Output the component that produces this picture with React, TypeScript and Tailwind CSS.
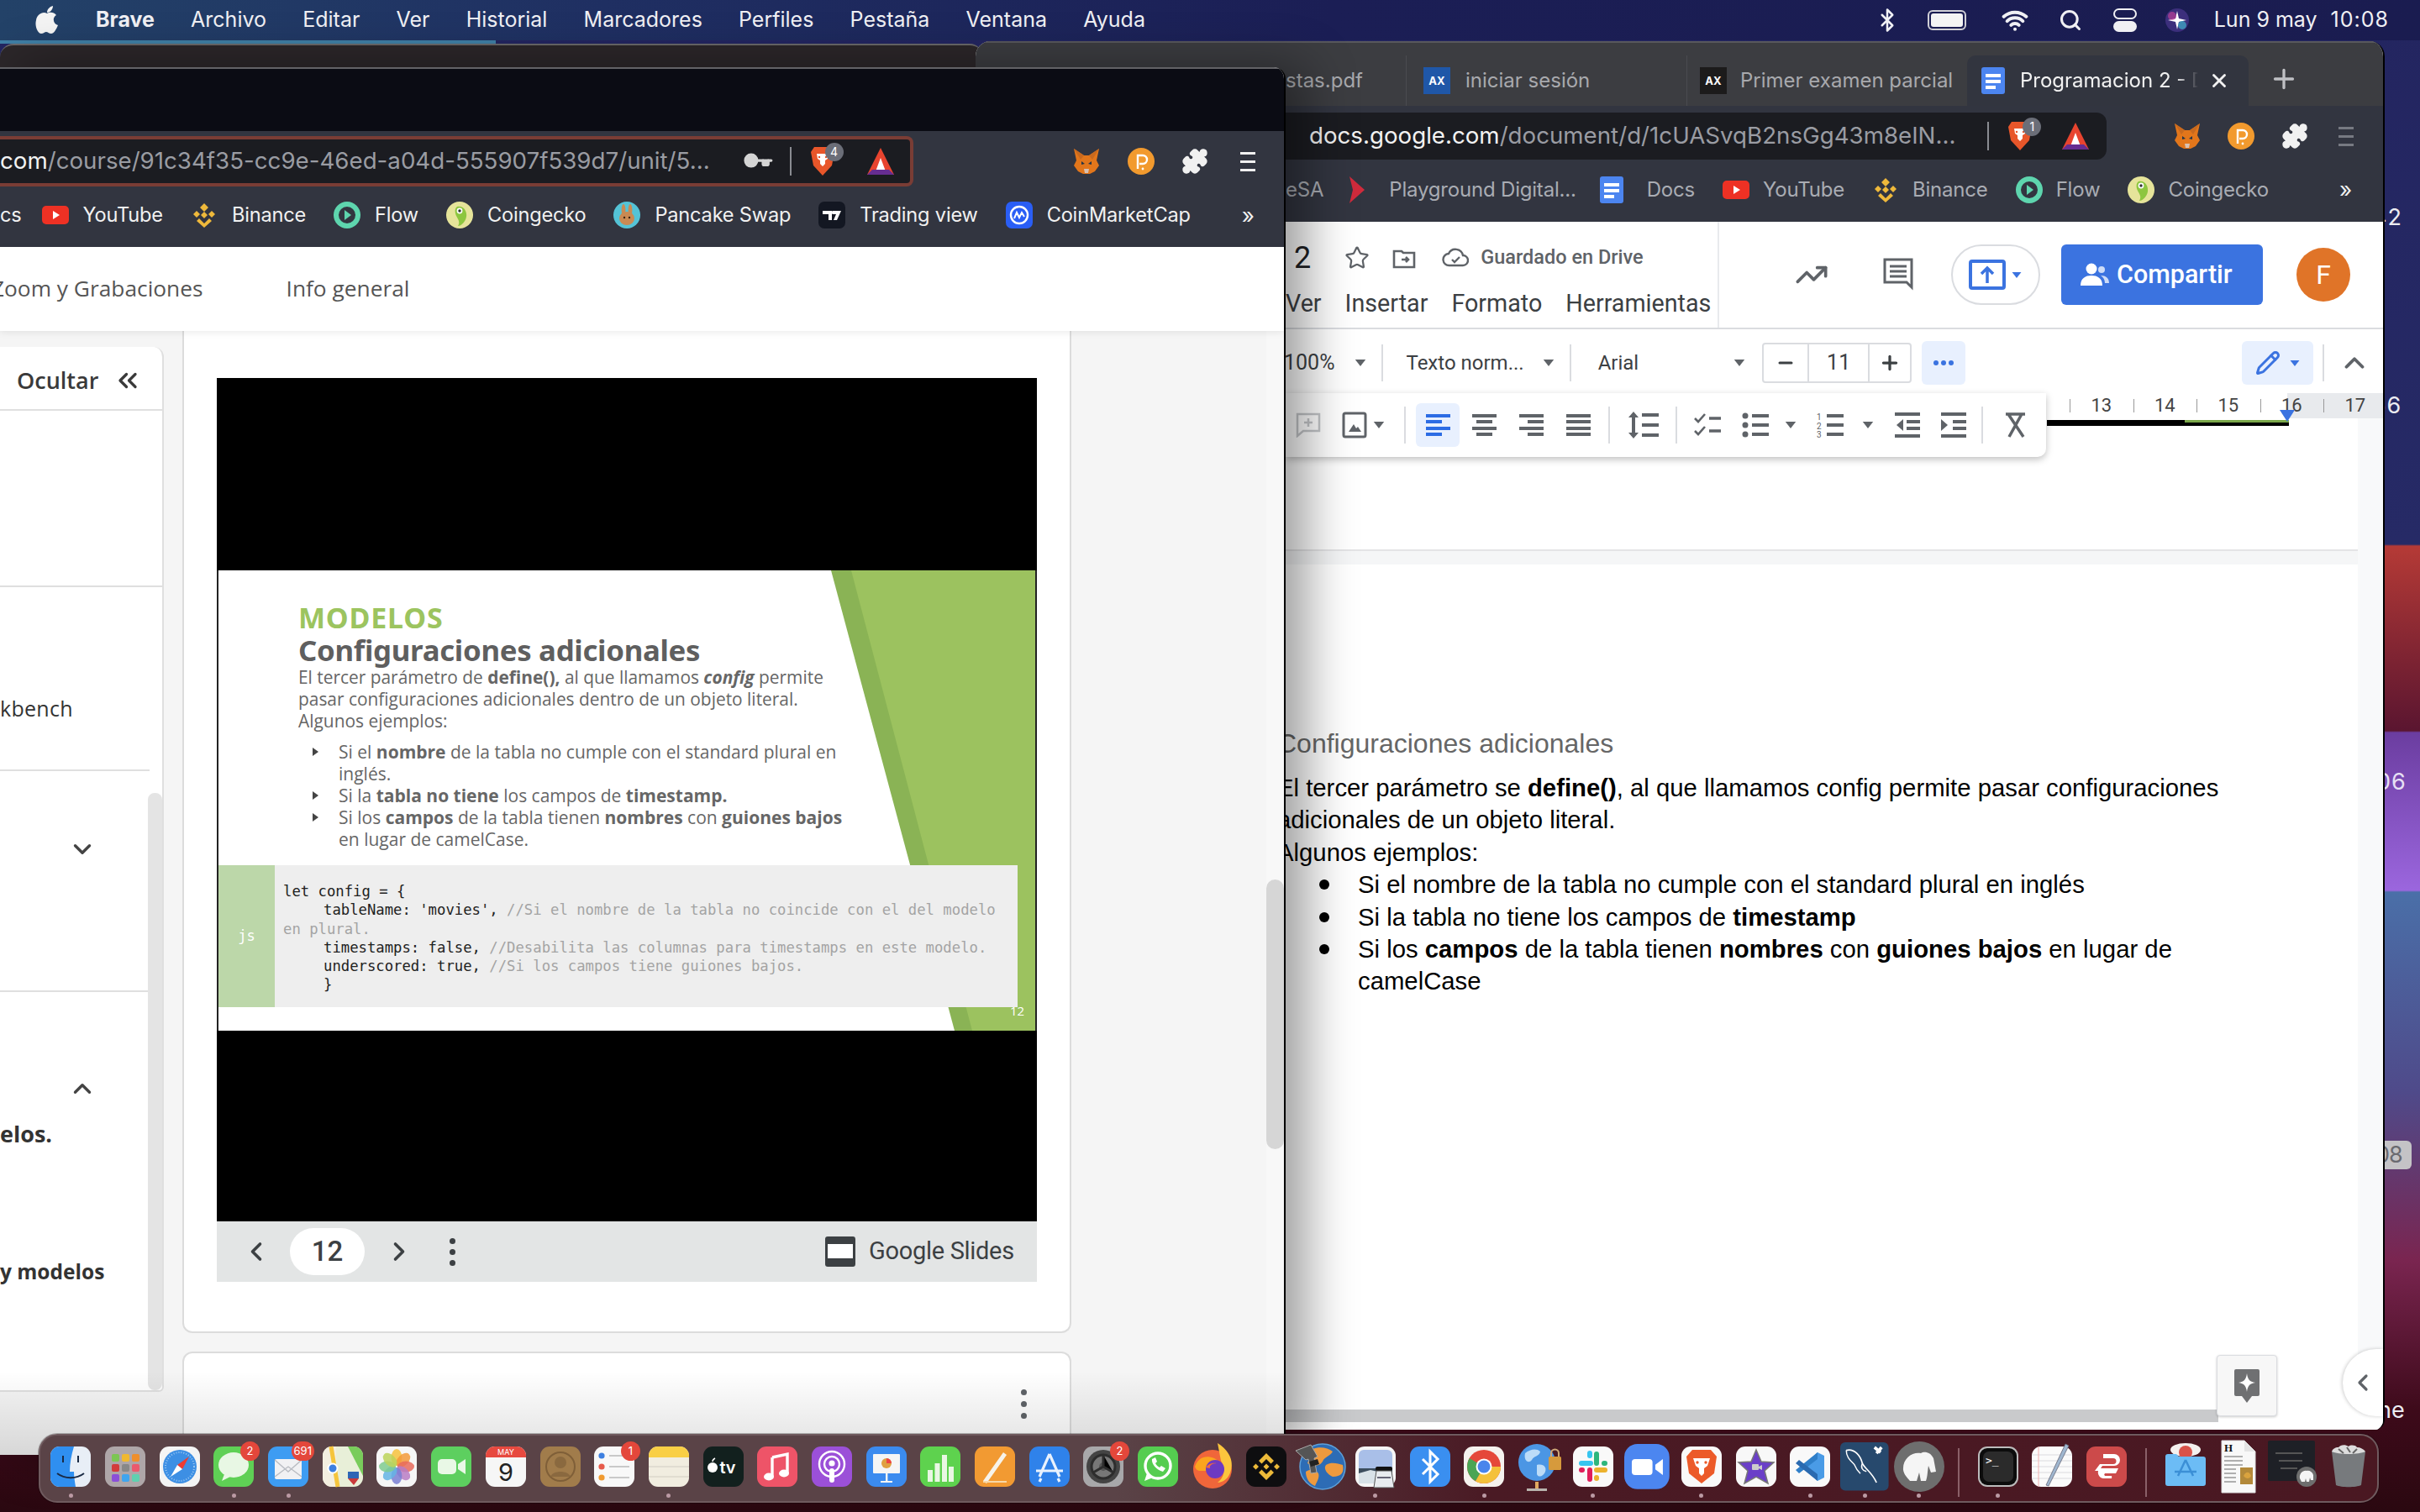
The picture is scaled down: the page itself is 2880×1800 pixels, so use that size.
import React from "react";
import { ChevronLeft, ChevronRight, ChevronDown, ChevronUp, ChevronsLeft, Star, Search, Bluetooth, Wifi, Plus, Minus, X, Key, Puzzle, TrendingUp, Pencil } from "lucide-react";

const Caret = ({ c = "#5f6368", s = 9 }: { c?: string; s?: number }) => (
  <svg width={s * 2} height={s} viewBox="0 0 18 9" className="shrink-0"><path d="M2 0h14L9 9z" fill={c} /></svg>
);
const YT = () => (<svg width="32" height="32" viewBox="0 0 32 32" className="shrink-0"><rect x="0" y="5" width="32" height="22" rx="5" fill="#ee3124" /><path d="M13 11l8 5-8 5z" fill="#fff" /></svg>);
const Binance = () => (<svg width="32" height="32" viewBox="0 0 32 32" className="shrink-0" fill="#efb93b"><path d="M16 2l5 5-5 5-5-5zM7 11l4 4-4 4-4-4zM25 11l4 4-4 4-4-4zM16 12l4 4-4 4-4-4zM10 20l6 6 6-6 3 3-9 8-9-8z" /></svg>);
const Flow = () => (<svg width="32" height="32" viewBox="0 0 32 32" className="shrink-0"><circle cx="16" cy="16" r="16" fill="#5ed5ae" /><circle cx="16" cy="16" r="10" fill="#323540" /><path d="M13 10l8 6-8 6z" fill="#5ed5ae" /></svg>);
const Gecko = () => (<svg width="32" height="32" viewBox="0 0 32 32" className="shrink-0"><circle cx="16" cy="16" r="16" fill="#e6e49a" /><path d="M13 6c8-2 12 6 11 12s-6 11-10 11c3-5 0-8-2-12s-2-9 1-11z" fill="#8dc63f" /><circle cx="16" cy="11" r="3.4" fill="#fff" /><circle cx="16" cy="11" r="1.7" fill="#333" /></svg>);
const Pancake = () => (<svg width="32" height="32" viewBox="0 0 32 32" className="shrink-0"><circle cx="16" cy="16" r="16" fill="#54c3d6" /><ellipse cx="16" cy="20" rx="9" ry="8" fill="#c98a53" /><ellipse cx="12" cy="10" rx="2.4" ry="7" fill="#c98a53" /><ellipse cx="20" cy="10" rx="2.4" ry="7" fill="#c98a53" /><circle cx="13" cy="19" r="1.2" fill="#3a2211" /><circle cx="19" cy="19" r="1.2" fill="#3a2211" /></svg>);
const TV = () => (<svg width="32" height="32" viewBox="0 0 32 32" className="shrink-0"><rect width="32" height="32" rx="7" fill="#131722" /><path d="M5 11h11v11h-4v-7H5zM17 11h10l-5 11h-4l3-7h-4z" fill="#fff" /><circle cx="17.5" cy="13" r="2" fill="#fff" /></svg>);
const CMC = () => (<svg width="32" height="32" viewBox="0 0 32 32" className="shrink-0"><rect width="32" height="32" rx="7" fill="#2a5ef5" /><circle cx="16" cy="16" r="10" fill="none" stroke="#fff" strokeWidth="2.4" /><path d="M10 20l3-7 3 6 3-6 3 5" fill="none" stroke="#fff" strokeWidth="2" /></svg>);
const DocsI = ({ s = 32 }: { s?: number }) => (<svg width={s} height={s} viewBox="0 0 32 32" className="shrink-0"><rect x="2" width="28" height="32" rx="3" fill="#4c85f0" /><rect x="7" y="8" width="18" height="4" fill="#fff" /><rect x="7" y="15" width="18" height="4" fill="#fff" /><rect x="7" y="22" width="12" height="4" fill="#fff" /></svg>);
const Chev = () => (<svg width="32" height="32" viewBox="0 0 32 32" className="shrink-0"><path d="M7 0l18 16L7 32l4-16z" fill="#d02b3c" /></svg>);
const Brave = ({ n }: { n: string }) => (
  <div className="relative w-[34px] h-[40px] shrink-0">
    <svg width="30" height="36" viewBox="0 0 30 36" className="absolute left-0 top-[2px]"><path d="M5 1h20l4 6-3 16-11 12L4 23 1 7z" fill="#e8562a" /><path d="M8 9h14l-1 6-3 2v4l-3 3-3-3v-4l-3-2z" fill="#fff" /><circle cx="11" cy="13" r="1.2" fill="#e8562a" /><circle cx="19" cy="13" r="1.2" fill="#e8562a" /></svg>
    <div className="absolute left-[18px] -top-[2px] w-[22px] h-[22px] rounded-full bg-[#6b6e78] text-[14px] leading-[22px] text-center text-white">{n}</div>
  </div>
);
const BAT = () => (<svg width="34" height="32" viewBox="0 0 34 32" className="shrink-0"><path d="M17 0l16 32H1z" fill="#e8442f" /><path d="M17 12l6 16H11z" fill="#fff" /><path d="M1 32l6-6h20l6 6z" fill="#662d91" /></svg>);
const Fox = () => (<svg width="32" height="32" viewBox="0 0 32 32" className="shrink-0"><path d="M1 1l12 8h6l12-8-3 14 3 6-5 7-6 3h-8l-6-3-5-7 3-6z" fill="#e2761b" /><path d="M10 16l4 3-4 1zM22 16l-4 3 4 1z" fill="#233447" /><path d="M13 25h6l-1 5h-4z" fill="#d7c1b3" /><path d="M1 1l12 8-4 5zM31 1L19 9l4 5z" fill="#c8691e" /></svg>);
const PI = () => (<svg width="32" height="32" viewBox="0 0 32 32" className="shrink-0"><circle cx="16" cy="16" r="16" fill="#f29a2e" /><path d="M12 25V9h6a5 5 0 010 10h-4" fill="none" stroke="#fff" strokeWidth="2.4" /><circle cx="18" cy="25" r="1.4" fill="#fff" /></svg>);
const Ham = ({ c }: { c: string }) => (<div className="flex flex-col gap-[7px] shrink-0"><div className={"w-[18px] h-[3px] " + c} /><div className={"w-[18px] h-[3px] " + c} /><div className={"w-[18px] h-[3px] " + c} /></div>);
const PuzzleI = () => <Puzzle size={32} fill="#f1f1f1" stroke="#f1f1f1" className="shrink-0" />;

const Bm = ({ icon, t, cls, ml, gap = "gap-[16px]" }: { icon: React.ReactNode; t: string; cls: string; ml: string; gap?: string }) => (
  <div className={"flex items-center shrink-0 " + gap + " " + ml}>{icon}<span className={"whitespace-nowrap " + cls}>{t}</span></div>
);

const Al = ({ w, a, c = "#5f6368" }: { w: number[]; a: string; c?: string }) => (
  <div className={"flex flex-col gap-[3.5px] w-[29px] shrink-0 " + a}>
    {w.map((x, i) => <div key={i} className="h-[4px]" style={{ width: x, background: c }} />)}
  </div>
);

const Sep = ({ ml }: { ml: string }) => <div className={"w-[2px] h-[44px] bg-[#dadce0] shrink-0 " + ml} />;

/* ---------- dock icons ---------- */
const B = ({ f, r = 11 }: { f: string; r?: number }) => <rect width="48" height="48" rx={r} fill={f} />;
const dock: { k: string; dot?: boolean; badge?: string; svg: React.ReactNode }[] = [
  { k: "finder", dot: true, svg: <><B f="#e8eef6" /><path d="M11 0h17c-3 10-5 20-5 30h5c0 6 1 12 2 18H11A11 11 0 010 37V11A11 11 0 0111 0z" fill="#2f8ff0" /><path d="M15 11v8M33 11v8" stroke="#1a2a44" strokeWidth="2" /><path d="M8 32c9 7 23 7 32 0" fill="none" stroke="#1a2a44" strokeWidth="2" /></> },
  { k: "launch", svg: <><B f="#aea6a8" />{[["#7cc653", 8, 9], ["#f0b830", 20, 9], ["#ef8f2c", 32, 9], ["#d23b3b", 8, 21], ["#888", 20, 21], ["#ea5a6d", 32, 21], ["#8b4fd8", 8, 33], ["#3fa5ee", 20, 33], ["#5fd0b0", 32, 33]].map((p: any, i) => <rect key={i} x={p[1]} y={p[2]} width="9" height="9" rx="2" fill={p[0]} />)}</> },
  { k: "safari", svg: <><B f="#f4f4f4" /><circle cx="24" cy="24" r="20" fill="#3d8fe4" /><circle cx="24" cy="24" r="17" fill="none" stroke="#9cc9f2" strokeWidth="2" strokeDasharray="1 2" /><path d="M35 12L21 22l6 5z" fill="#ee3b32" /><path d="M13 36l14-9-6-5z" fill="#fff" /></> },
  { k: "messages", dot: true, badge: "2", svg: <><B f="#5fd055" /><ellipse cx="24" cy="22" rx="18" ry="15" fill="#e8f7e4" /><path d="M13 33l-3 8 10-5z" fill="#e8f7e4" /></> },
  { k: "mail", dot: true, badge: "691", svg: <><B f="#3d9cf2" /><rect x="8" y="15" width="32" height="24" rx="2" fill="#f1f1f3" /><path d="M8 36l16-12 16 12M8 16l16 14 16-14" fill="none" stroke="#b9bcc2" strokeWidth="1.4" /></> },
  { k: "maps", svg: <><B f="#e8efd8" /><path d="M30 0h7a11 11 0 0111 11v24z" fill="#79cc5b" /><path d="M0 11A11 11 0 0111 0h5v48h-5A11 11 0 010 37z" fill="#f3efe0" /><path d="M10 0l8 48" stroke="#f5c53d" strokeWidth="5" /><circle cx="12" cy="26" r="5.5" fill="#3d7fe0" stroke="#fff" strokeWidth="2" /><path d="M30 38h13v-8H30z" fill="#2e66b5" /><path d="M30 38h13l-6 8z" fill="#c93a3a" /></> },
  { k: "photos", svg: <><B f="#f6f6f6" />{["#f7c23c", "#f39a3a", "#e76a5c", "#b97cc4", "#7a7fd4", "#64b4e4", "#7fcb8f", "#bcd45a"].map((c, i) => <ellipse key={i} cx="24" cy="13" rx="6.4" ry="10" fill={c} opacity=".85" transform={`rotate(${i * 45} 24 24)`} />)}</> },
  { k: "facetime", svg: <><B f="#5dcf5f" /><rect x="8" y="15" width="22" height="18" rx="5" fill="#e9f8e6" /><path d="M32 21l9-6v18l-9-6z" fill="#e9f8e6" /></> },
  { k: "cal", svg: <><B f="#f6f6f6" /><path d="M0 13V11A11 11 0 0111 0h26a11 11 0 0111 11v2z" fill="#e7493f" /><text x="24" y="10" textAnchor="middle" fontSize="9" fill="#fff" fontFamily="Inter">MAY</text><text x="24" y="41" textAnchor="middle" fontSize="29" fill="#222" fontFamily="Inter">9</text></> },
  { k: "contacts", svg: <><B f="#a17c4b" /><circle cx="24" cy="24" r="17" fill="none" stroke="#7f5f38" strokeWidth="2" /><circle cx="24" cy="19" r="7" fill="#8a693f" /><path d="M12 36c3-8 21-8 24 0" fill="#8a693f" /></> },
  { k: "remind", badge: "1", svg: <><B f="#f8f8f8" /><circle cx="9" cy="11" r="3.6" fill="#3d7fe0" /><circle cx="9" cy="24" r="3.6" fill="#e65a4a" /><circle cx="9" cy="37" r="3.6" fill="#f09a30" /><path d="M18 11h24M18 24h24M18 37h24" stroke="#c9c9c9" strokeWidth="2" /></> },
  { k: "notes", dot: true, svg: <><B f="#f1ede0" /><path d="M0 13V11A11 11 0 0111 0h26a11 11 0 0111 11v2z" fill="#f9cf45" /><path d="M0 24h48M0 36h48" stroke="#dcd8cc" strokeWidth="1.5" /></> },
  { k: "tv", svg: <><B f="#12201e" /><text x="29" y="32" textAnchor="middle" fontSize="20" fill="#fff" fontFamily="Inter" fontWeight="600">tv</text><circle cx="11" cy="25" r="6" fill="#fff" /><path d="M11 18c0-2 1-3 3-4" stroke="#fff" strokeWidth="1.5" /></> },
  { k: "music", svg: <><B f="#ee5468" /><path d="M18 13l18-4v23" fill="none" stroke="#fff" strokeWidth="3.4" /><path d="M18 13v23" stroke="#fff" strokeWidth="3.4" /><ellipse cx="14" cy="36" rx="6" ry="4.4" fill="#fff" /><ellipse cx="32" cy="32" rx="6" ry="4.4" fill="#fff" /></> },
  { k: "podcasts", svg: <><B f="#9b50d8" /><circle cx="24" cy="21" r="15" fill="none" stroke="#fff" strokeWidth="2.4" /><circle cx="24" cy="21" r="9" fill="none" stroke="#fff" strokeWidth="2.4" /><circle cx="24" cy="20" r="3.6" fill="#fff" /><rect x="21" y="26" width="6" height="17" rx="3" fill="#fff" /></> },
  { k: "keynote", svg: <><B f="#3b8bef" /><rect x="8" y="9" width="32" height="23" rx="1" fill="#f5f5f5" /><circle cx="24" cy="20" r="6" fill="#e0a040" /><path d="M24 20V14a6 6 0 016 6z" fill="#e44" /><rect x="23" y="32" width="2.4" height="9" fill="#f5f5f5" /><rect x="17" y="41" width="14" height="2" fill="#f5f5f5" /></> },
  { k: "numbers", svg: <><B f="#5ed24e" /><rect x="9" y="28" width="6" height="14" fill="#e9f7e3" /><rect x="17.5" y="20" width="6" height="22" fill="#e9f7e3" /><rect x="26" y="10" width="6" height="32" fill="#e9f7e3" /><rect x="34" y="24" width="6" height="18" fill="#e9f7e3" /></> },
  { k: "pages", svg: <><B f="#f29a32" /><path d="M10 41L34 7l4 3-24 34z" fill="#f7f3ea" /><path d="M10 42h28" stroke="#f7d8a8" strokeWidth="2" /></> },
  { k: "store", svg: <><B f="#2f82ea" /><path d="M24 9L12 36M24 9l12 27M8 29h32M14 38l-2 4M34 38l2 4" stroke="#e9f2fd" strokeWidth="3.2" fill="none" /></> },
  { k: "settings", badge: "2", svg: <><B f="#a8a8aa" /><circle cx="24" cy="24" r="20" fill="#444" /><circle cx="24" cy="24" r="14" fill="#777" stroke="#2d2d2d" strokeWidth="3" /><circle cx="24" cy="24" r="5" fill="#555" /><path d="M24 10v14l12 7M24 24l-12 7" stroke="#2d2d2d" strokeWidth="3" /></> },
  { k: "whatsapp", svg: <><B f="#55cd50" /><circle cx="24" cy="23" r="15" fill="none" stroke="#fff" strokeWidth="3.4" /><path d="M11 32l-3 9 10-4z" fill="#fff" /><path d="M17 15c-1 5 5 13 13 15l3-4-5-3-2 2c-2-1-4-3-5-5l2-2-2-5z" fill="#fff" /></> },
  { k: "firefox", svg: <><circle cx="24" cy="27" r="23" fill="#f0663a" /><path d="M30 -4c10 6 20 18 16 32-2 10-10 15-16 15 8-6 10-16 4-26z" fill="#fcc53d" /><path d="M3 24C7 12 17 10 26 14c6 3 7 10 6 15H10C6 29 4 27 3 24z" fill="#fba51e" /><circle cx="27" cy="27" r="11" fill="#6d3ac2" /><path d="M16 25c3-5 9-6 13-5-6 0-9 3-8 6z" fill="#f26a3a" /></> },
  { k: "binance", svg: <><B f="#0e0e10" /><g fill="#edba39"><path d="M24 8l9 9-3.5 3.5L24 15l-5.5 5.5L15 17zM8 24l3.5-3.5L15 24l-3.500 3.500zM33 24l3.500-3.500L40 24l-3.500 3.500zM24 20.500l3.500 3.500-3.500 3.500-3.500-3.500zM15 31l3.500-3.500L24 33l5.500-5.500L33 31l-9 9z" /></g></> },
  { k: "gimp", svg: <><circle cx="26" cy="24" r="27" fill="#2d6cb5" stroke="#5da0d8" strokeWidth="1.5" /><path d="M14 3c8-3 18-2 24 3-3 6-10 6-12 12-4 6-12 6-18 2zM6 30c6-4 12-2 15 2 2 5-3 12-4 15C10 44 6 38 6 30zM30 22c6-4 14-2 20 0 2 9-2 14-12 14-5-2-12-9-8-14z" fill="#ee9a3e" /><path d="M-6 5L12-2l8 14-4 2 3 17-7 1-3-17-3 1z" fill="#555" stroke="#aaa" /><path d="M10 18l10-3 2 6-10 3z" fill="#222" /></> },
  { k: "preview", dot: true, svg: <><B f="#f6f6f6" /><rect x="4" y="4" width="40" height="40" rx="6" fill="#a9bfe8" /><rect x="4" y="26" width="40" height="18" fill="#3c4e5e" /><path d="M4 32l14-4 26 6v10H4z" fill="#d8e2e8" /><rect x="24" y="24" width="20" height="5" rx="2" fill="#111" /><path d="M25 29h18l3 20H22z" fill="#e8ecef" stroke="#555" /><path d="M26 37h16" stroke="#667" strokeWidth="2" /></> },
  { k: "bt", svg: <><B f="#3a8ff0" /><path d="M15 15l18 18-9 9V6l9 9-18 18" fill="none" stroke="#fff" strokeWidth="3" /></> },
  { k: "chrome", dot: true, svg: <><B f="#f5f2ee" /><circle cx="24" cy="24" r="20" fill="#e5483a" /><path d="M24 24L6.700 14A20 20 0 0014 41.300z" fill="#4aa554" /><path d="M24 24H44a20 20 0 01-30 17.300z" fill="#f4c13a" /><circle cx="24" cy="24" r="9.500" fill="#fff" /><circle cx="24" cy="24" r="7.500" fill="#4a85ec" /></> },
  { k: "globe", svg: <><circle cx="22" cy="19" r="22" fill="#4b96e4" /><path d="M8 8c6-5 14-6 18-2-1 6-8 5-10 10-4 5-10 1-8-8zM22 22c8-2 12 3 10 8s-8 8-10 3z" fill="#bcdcf8" /><rect x="36" y="12" width="15" height="16" rx="1.500" fill="#d69a3c" /><path d="M39 12V8a4.500 4.500 0 019 0v4" fill="none" stroke="#cfa878" strokeWidth="2" /><rect x="20" y="42" width="4" height="8" fill="#e0a860" /><rect x="10" y="50" width="24" height="3" fill="#b9b4ae" /></> },
  { k: "slack", dot: true, svg: <><B f="#f9f9f9" /><g strokeWidth="6" strokeLinecap="round" fill="none"><path d="M10 20h11" stroke="#36c5f0" /><path d="M20 8v3" stroke="#36c5f0" /><path d="M28 9v11" stroke="#2eb67d" /><path d="M38 20h-1" stroke="#2eb67d" /><path d="M38 28H28" stroke="#ecb22e" /><path d="M28 38v-1" stroke="#ecb22e" /><path d="M20 28v11" stroke="#e01e5a" /><path d="M10 28h1" stroke="#e01e5a" /></g></> },
  { k: "zoom", svg: <g transform="translate(-3 -3) scale(1.12)"><rect width="48" height="48" rx="14" fill="#4c86f0" /><rect x="8" y="16" width="22" height="17" rx="3.500" fill="#fff" /><path d="M33 22l8-6v17l-8-6z" fill="#fff" /></g> },
  { k: "brave", dot: true, svg: <><B f="#f9f9f9" /><path d="M13 4h22l7 8-3 20-15 12L9 32 6 12z" fill="#ec5a29" /><path d="M14 14h20l-3 9-4 3v6l-3 3-3-3v-6l-4-3z" fill="#fff" /><circle cx="19" cy="19" r="1.700" fill="#ec5a29" /><circle cx="29" cy="19" r="1.700" fill="#ec5a29" /></> },
  { k: "imovie", svg: <><B f="#f8f8f8" /><path d="M24 4l6 14 15 1-11 10 4 15-14-8-14 8 4-15L3 19l15-1z" fill="#6a3fc8" stroke="#777" strokeWidth="1.500" /><rect x="19" y="21" width="8" height="7" rx="1" fill="#ccc" /><path d="M27 24l4-2v6l-4-2z" fill="#ccc" /></> },
  { k: "vscode", dot: true, svg: <><B f="#f9f9f9" /><path d="M33 7l8 4v26l-8 4-18-16z" fill="#4a9be6" /><path d="M33 7L7 28l4 4L33 15z" fill="#2f7fc9" /><path d="M33 41L7 20l4-4 22 17z" fill="#2a6ab0" /></> },
  { k: "mysql", dot: true, svg: <g transform="translate(-5 -5) scale(1.2)"><rect width="48" height="48" rx="5" fill="#27496d" /><path d="M6 8c8-2 14 5 16 13 3 6 9 8 14 19" fill="none" stroke="#fff" strokeWidth="1.400" /><path d="M6 8c0 7 4 10 8 14 2 5 4 7 6 9M22 21c-2 4 0 7 4 8" fill="none" stroke="#fff" strokeWidth="1.200" /><path d="M34 5l6 5M36 11l5-6" stroke="#fff" strokeWidth="3" /></g> },
  { k: "mamp", dot: true, svg: <><circle cx="24" cy="24" r="30" fill="#6e6e6e" /><path d="M5 28C4 14 16 6 26 8c4-3 12-1 15 6l3 16-6 1-3-8c-1 5-1 13-3 18h-6l-2-10-3 10h-8c-3-4-7-7-8-13z" fill="#f5f5f5" /></> },
  { k: "sep1", svg: null },
  { k: "term", dot: true, svg: <><B f="#bcbcbc" /><rect x="2" y="2" width="44" height="44" rx="9" fill="#0c0c0c" /><rect x="6" y="6" width="36" height="36" rx="7" fill="#2b2b2b" /><text x="9" y="21" fontSize="13" fill="#fff" fontFamily="DejaVu Sans Mono">&gt;_</text></> },
  { k: "textedit", svg: <><B f="#fbfbfb" /><path d="M0 10h48M0 17h48M0 24h48M0 31h48M0 38h48" stroke="#dcdce0" strokeWidth="1.200" /><path d="M8 0v48" stroke="#f0b0b0" /><path d="M40-3l4 2-24 48-3-1z" fill="#9fb7d0" stroke="#667" strokeWidth=".8" /></> },
  { k: "express", svg: <><B f="#cc4a4a" /><path d="M20 9h13a7 7 0 010 14H19l-4 6h-5l6-8h16a3 3 0 000-7H20z M16 26h22l-3 6H22a2 2 0 000 3h8a5 5 0 010 3H20a7 7 0 01-4-12z" fill="#fff" /></> },
  { k: "sep2", svg: null },
  { k: "folder", svg: <><ellipse cx="24" cy="4" rx="18" ry="8" fill="#f4f0ee" /><circle cx="24" cy="7" r="8" fill="#d9534a" /><path d="M0 12a3 3 0 013-3h10l3 3h29a3 3 0 013 3v29a3 3 0 01-3 3H3a3 3 0 01-3-3z" fill="#6cbcf5" /><path d="M24 16l-9 19M24 16l9 19M11 30h26" stroke="#3b8fd6" strokeWidth="2.500" fill="none" /></> },
  { k: "rtf", svg: <><path d="M2-7h27l13 13v49H2z" fill="#f8f8f8" stroke="#ddd" /><path d="M29-7l13 13H29z" fill="#e4e4e4" /><text x="5" y="6" fontSize="13" fontWeight="700" fontFamily="Liberation Serif" fill="#111">H</text><path d="M5 12h22M5 17h22M5 22h22M5 27h14M5 32h14M5 37h14M5 42h14" stroke="#666" strokeWidth="1.200" /><rect x="24" y="25" width="15" height="20" fill="#b3893a" /><path d="M28 35c3-6 7-5 9 0-2 4-6 4-9 0z" fill="#d9a33f" /></> },
  { k: "shot", svg: <><rect x="-7" y="-7" width="56" height="48" rx="2" fill="#1e2026" /><path d="M2 8h32M6 17h28M8 26h20" stroke="#555" strokeWidth="2" /><circle cx="39" cy="36" r="12" fill="#6e6e6e" /><path d="M31 38c-1-6 4-10 8-9 3-1 7 1 8 5l0 6-3 0-1-3-1 5-3 0-1-4-1 4-4 0z" fill="#f5f5f5" /></> },
  { k: "trash", svg: <><path d="M4 6c10-4 30-4 40 0l-5 40c-6 3-24 3-30 0z" fill="#777a7d" /><path d="M4 6c8 4 32 4 40 0-2-3-6-5-10-5-2-3-8-3-10-1-4-3-10-2-12 1-4 0-7 2-8 5z" fill="#ddd" /><path d="M12 3l6 5M22 1l4 6M34 3l-5 5" stroke="#666" strokeWidth="2" /></> },
];

const DockSlot = ({ it }: { it: (typeof dock)[number] }) => {
  if (it.k.startsWith("sep")) return <div className="w-[29.3px] shrink-0 flex justify-center"><div className="w-[2px] h-[58px] mt-[2px] bg-[#8a6068]" /></div>;
  return (
    <div className="relative w-[64.7px] h-[60px] shrink-0 flex flex-col items-center">
      <svg width="48" height="48" viewBox="0 0 48 48" className="overflow-visible">{it.svg}</svg>
      {it.dot && <div className="absolute -bottom-[1px] w-[5px] h-[5px] rounded-full bg-[#bb9aa4]" />}
      {it.badge && (
        <div className={"absolute -top-[6px] h-[23px] rounded-full bg-[#e4473b] text-white text-[13px] leading-[23px] text-center font-['Inter',sans-serif] " + (it.badge.length > 1 ? "left-[36px] w-[27px] text-[11px]" : "left-[40px] w-[23px]")}>{it.badge}</div>
      )}
    </div>
  );
};

const MenuItem = ({ t, b }: { t: string; b?: boolean }) => <span className={b ? "font-bold" : ""}>{t}</span>;

export default function App() {
  const bmL = "text-[23.6px] text-[#f1f1f1] font-['Inter',sans-serif] tracking-[-0.2px]";
  const bmR = "text-[24px] text-[#a9acb3] font-['Inter',sans-serif] tracking-[-0.2px]";
  return (
    <div className="relative w-[2880px] h-[1800px] overflow-hidden font-['Inter',sans-serif] bg-[linear-gradient(180deg,#232560_0px,#262a66_648px,#b53a36_650px,#5a1530_870px,#6b3da0_872px,#9b66de_1060px,#4a6fa8_1062px,#4f4a8a_1300px,#7a2550_1500px,#3d0a1a_1680px,#2a0810_1800px)]">
      {/* desktop strip labels */}
      <div className="absolute left-[2823px] top-[239px] text-[27px] text-[#ececf2] tracking-[1px]">42</div>
      <div className="absolute left-[2823px] top-[463px] text-[27px] text-[#ececf2] tracking-[1px]">56</div>
      <div className="absolute left-[2828px] top-[911px] text-[27px] text-[#e6e0f4] tracking-[1px]">06</div>
      <div className="absolute left-[2810px] top-[1358px] w-[60px] h-[34px] rounded-r-[6px] bg-[#c4c3c6] text-[27px] leading-[34px] text-[#6a6a70] pl-[17px] tracking-[-1px]">08</div>
      <div className="absolute left-[2830px] top-[1659px] text-[27px] text-[#ececf2]">ne</div>

      {/* menu bar */}
      <div className="absolute inset-x-0 top-0 h-[48px] flex items-center bg-[linear-gradient(90deg,#234268_0%,#1f2f62_25%,#1b1e55_55%,#1a1c50_100%)] text-[25px] text-[#f0f0f4]">
        <svg width="28" height="34" viewBox="0 0 28 34" className="ml-[42px] shrink-0" fill="#f4f4f4"><path d="M14 9c3-2 8-2 11 2-5 3-4 10 2 12-2 5-5 10-8 10-3 0-4-2-6-2s-3 2-6 2C3 33-1 24 1 17 2 10 9 6 14 9zM14 8c0-4 3-7 7-8 0 4-3 8-7 8z" /></svg>
        <div className="flex items-center gap-[43.2px] ml-[44px] whitespace-nowrap">
          {["Brave", "Archivo", "Editar", "Ver", "Historial", "Marcadores", "Perfiles", "Pestaña", "Ventana", "Ayuda"].map((t, i) => <MenuItem key={t} t={t} b={i === 0} />)}
        </div>
        <div className="ml-auto flex items-center mr-[37px]">
          <Bluetooth size={30} strokeWidth={2} />
          <div className="ml-[33px] w-[46px] h-[24px] rounded-[6px] border-2 border-[#cfcfd6] p-[2px]"><div className="w-full h-full rounded-[3px] bg-[#f4f4f4]" /></div>
          <Wifi size={32} strokeWidth={3} className="ml-[42px]" />
          <Search size={28} strokeWidth={2.6} className="ml-[36px]" />
          <div className="ml-[37px] w-[28px] flex flex-col gap-[2px]">
            <div className="h-[13px] rounded-full border-2 border-[#f0f0f4]" />
            <div className="h-[13px] rounded-full bg-[#f0f0f4]" />
          </div>
          <svg width="28" height="28" viewBox="0 0 28 28" className="ml-[34px]"><circle cx="14" cy="14" r="14" fill="#3c2f7c" /><path d="M14 3l2 9 9 2-9 2-2 9-2-9-9-2 9-2z" fill="#fff" /><circle cx="8" cy="9" r="5" fill="#d0459c" opacity=".6" /><circle cx="20" cy="20" r="5" fill="#3fc8d8" opacity=".6" /></svg>
          <span className="ml-[30px] text-[25px] whitespace-nowrap">Lun 9 may</span>
          <span className="ml-[16px] text-[25px] tracking-[1px]">10:08</span>
        </div>
      </div>
      <div className="absolute left-0 top-[48px] w-[590px] h-[4px] bg-[#3f7fa6]" />

      {/* back window */}
      <div className="absolute left-0 top-[52px] w-[1170px] h-[32px] rounded-t-[16px] bg-[#2c272a] border-t-2 border-[#6a686a]" />

      {/* right window */}
      <div className="absolute left-[1161px] top-[49px] w-[1677px] h-[1653px] rounded-t-[18px] rounded-b-[12px] overflow-hidden flex flex-col border-r-2 border-black bg-white">
        <div className="h-[77px] bg-[#3c3d41] flex items-end pl-[369px] shrink-0 border-t-2 border-[#58585c]">
          <div className="h-[60px] w-[144px] shrink-0 flex items-center text-[24px] text-[#a8a9ad] border-r border-[#4a4b50]">stas.pdf</div>
          <div className="h-[60px] w-[334px] shrink-0 flex items-center pl-[20px] gap-[18px] text-[24px] text-[#a8a9ad] border-r border-[#4a4b50]">
            <svg width="32" height="32" viewBox="0 0 32 32"><rect width="32" height="32" fill="#1f57a8" /><text x="16" y="21" textAnchor="middle" fontSize="13" fontWeight="700" fill="#fff" fontFamily="Inter">AX</text></svg>
            iniciar sesión
          </div>
          <div className="h-[60px] w-[333px] shrink-0 flex items-center pl-[15px] gap-[16px] text-[24px] text-[#a8a9ad]">
            <svg width="32" height="32" viewBox="0 0 32 32"><rect width="32" height="32" fill="#1c1b1b" /><text x="16" y="21" textAnchor="middle" fontSize="13" fontWeight="700" fill="#fff" fontFamily="Inter">AX</text></svg>
            <span className="whitespace-nowrap">Primer examen parcial</span>
          </div>
          <div className="h-[60px] w-[335px] shrink-0 flex items-center pl-[15px] bg-[#32353f] rounded-t-[10px] text-[24px] text-[#f1f1f1]">
            <DocsI s={32} />
            <span className="ml-[16px] whitespace-nowrap w-[212px] overflow-hidden text-clip [mask-image:linear-gradient(90deg,#000_88%,transparent_100%)]">Programacion 2 - D</span>
            <X size={26} strokeWidth={2.6} className="ml-[12px]" />
          </div>
          <Plus size={36} strokeWidth={2.2} className="ml-[24px] mb-[14px] text-[#bfc0c4]" />
        </div>
        <div className="h-[64px] bg-[#323540] flex items-center pl-[369px] pt-[8px] shrink-0">
          <div className="h-[56px] w-[977px] bg-[#1b1c21] rounded-r-[12px] flex items-center pl-[28px] text-[27.7px]">
            <span className="text-[#f2f2f2]">docs.google.com</span><span className="text-[#9a9ca3] whitespace-nowrap">/document/d/1cUASvqB2nsGg43m8eIN...</span>
            <div className="w-[2px] h-[34px] bg-[#8a8c92] ml-[38px]" />
            <div className="ml-[22px]"><Brave n="1" /></div>
            <div className="ml-[30px]"><BAT /></div>
          </div>
          <div className="ml-[80px]"><Fox /></div>
          <div className="ml-[32px]"><PI /></div>
          <div className="ml-[32px]"><PuzzleI /></div>
          <div className="ml-[36px]"><Ham c="bg-[#777a82]" /></div>
        </div>
        <div className="h-[74px] pb-[3px] bg-[#323540] flex items-center pl-[369px] shrink-0">
          <span className={bmR}>eSA</span>
          <Bm icon={<Chev />} t="Playground Digital..." cls={bmR} gap="gap-[22px]" ml="ml-[24px]" />
          <Bm icon={<DocsI />} t="Docs" cls={bmR} gap="gap-[26px]" ml="ml-[26px]" />
          <Bm icon={<YT />} t="YouTube" cls={bmR} ml="ml-[33px]" />
          <Bm icon={<Binance />} t="Binance" cls={bmR} ml="ml-[33px]" />
          <Bm icon={<Flow />} t="Flow" cls={bmR} ml="ml-[33px]" />
          <Bm icon={<Gecko />} t="Coingecko" cls={bmR} ml="ml-[33px]" />
          <span className="ml-[84px] text-[26px] text-[#f1f1f1]">»</span>
        </div>
        {/* docs header */}
        <div className="h-[128px] flex pl-[369px] shrink-0 border-b-2 border-[#dadce0] bg-white font-['Roboto',sans-serif]">
          <div className="w-[516px] border-r-2 border-[#e8eaed] flex flex-col shrink-0">
            <div className="flex items-center h-[86px] pl-[10px]">
              <span className="text-[36px] text-[#202124]">2</span>
              <Star size={30} strokeWidth={1.8} className="ml-[40px] text-[#5f6368]" />
              <svg width="30" height="30" viewBox="0 0 30 30" fill="none" stroke="#5f6368" strokeWidth="2.600" className="ml-[26px]"><path d="M3 7v19h24V9H14l-2-2z" /><path d="M12 17h8M17 14l3 3-3 3" /></svg>
              <svg width="32" height="30" viewBox="0 0 32 30" fill="none" stroke="#5f6368" strokeWidth="2.400" className="ml-[30px]"><path d="M9 24a7 7 0 01-1-14 9 9 0 0117 2 6 6 0 010 12z" /><path d="M12 17l3 3 6-6" /></svg>
              <span className="ml-[14px] text-[23.5px] font-medium text-[#5f6368] whitespace-nowrap">Guardado en Drive</span>
            </div>
            <div className="flex items-center text-[28.7px] text-[#3c4043] gap-[28px] -mt-[10px]">
              <span>Ver</span><span>Insertar</span><span>Formato</span><span>Herramientas</span>
            </div>
          </div>
          <div className="flex items-center flex-1">
            <TrendingUp size={40} strokeWidth={2.2} className="ml-[90px] text-[#5f6368]" />
            <svg width="36" height="40" viewBox="0 0 36 40" fill="none" stroke="#5f6368" strokeWidth="3" className="ml-[65px]"><path d="M2 2h32v33l-6-6H2z" /><path d="M8 10h20M8 16h20M8 22h20" /></svg>
            <div className="ml-[45px] w-[106px] h-[72px] rounded-full border-2 border-[#dadce0] flex items-center justify-center gap-[6px]">
              <svg width="44" height="36" viewBox="0 0 44 36" fill="none"><rect x="2" y="2" width="40" height="32" rx="2" stroke="#3b73e0" strokeWidth="4" /><path d="M22 28V11M15 17l7-7 7 7" stroke="#3b73e0" strokeWidth="3.500" /></svg>
              <Caret c="#3b73e0" s={7} />
            </div>
            <div className="ml-[25px] w-[240px] h-[72px] bg-[#3b73e0] rounded-[6px] flex items-center gap-[8px] text-white text-[30.5px] font-medium pl-[22px]">
              <svg width="36" height="30" viewBox="0 0 36 30" fill="#fff"><circle cx="14" cy="8" r="6.500" /><path d="M1 28c0-9 6-12 13-12s13 3 13 12z" /><circle cx="26" cy="9" r="4" opacity=".75" /><path d="M25 16c6 0 10 3 10 9h-5c0-4-2-7-5-9z" opacity=".75" /></svg>Compartir
            </div>
            <div className="ml-[40px] w-[64px] h-[64px] rounded-full bg-[#e07428] text-white text-[32px] flex items-center justify-center">F</div>
          </div>
        </div>
        {/* docs toolbar */}
        <div className="h-[76px] pt-[4px] flex items-center pl-[369px] bg-white shrink-0 text-[#3c4043] text-[24px] font-['Roboto',sans-serif]">
          <span className="-ml-[2px] text-[25px]">100%</span>
          <div className="ml-[23px]"><Caret s={8} /></div>
          <Sep ml="ml-[17px]" />
          <span className="ml-[27px] whitespace-nowrap">Texto norm...</span>
          <div className="ml-[21px]"><Caret s={8} /></div>
          <Sep ml="ml-[17px]" />
          <span className="ml-[32px]">Arial</span>
          <div className="ml-[112px]"><Caret s={8} /></div>
          <div className="ml-[19px] w-[178px] h-[48px] rounded-[4px] border-2 border-[#dadce0] flex items-center">
            <div className="w-[52px] flex justify-center"><Minus size={24} strokeWidth={3} /></div>
            <div className="w-[74px] h-full border-x-2 border-[#dadce0] flex items-center justify-center text-[25px]">11</div>
            <div className="flex-1 flex justify-center"><Plus size={26} strokeWidth={3} /></div>
          </div>
          <div className="ml-[12px] w-[52px] h-[52px] rounded-[6px] bg-[#e8f0fe] flex items-center justify-center gap-[3px]"><i className="w-[6px] h-[6px] rounded-full bg-[#3b73e0]" /><i className="w-[6px] h-[6px] rounded-full bg-[#3b73e0]" /><i className="w-[6px] h-[6px] rounded-full bg-[#3b73e0]" /></div>
          <div className="ml-[329px] w-[85px] h-[52px] rounded-[6px] bg-[#e8f0fe] flex items-center justify-center gap-[10px]">
            <Pencil size={30} strokeWidth={2.4} className="text-[#3b73e0]" /><Caret c="#3b73e0" s={7} />
          </div>
          <Sep ml="ml-[11px]" />
          <ChevronUp size={38} strokeWidth={2.4} className="ml-[17px] text-[#5f6368]" />
        </div>
        {/* doc area */}
        <div className="relative flex-1 pl-[369px] bg-[#f8f9fa] flex flex-col min-h-0 font-['Liberation_Sans',sans-serif]">
          <div className="h-[30px] shrink-0 flex items-center pl-[933px] bg-[linear-gradient(90deg,#ffffff_1192px,#e8eaed_1192px)] font-['Roboto',sans-serif] text-[22px] text-[#444]">
            {[13, 14, 15, 16, 17].map((n) => (
              <div key={n} className="w-[75.5px] h-[22px] shrink-0 flex items-center justify-center relative leading-[22px]">
                <i className="absolute left-0 top-[3px] w-px h-[16px] bg-[#999]" />{n}
              </div>
            ))}
          </div>
          <div className="h-[156px] w-[1276px] shrink-0 bg-white">
            <div className="ml-[906px] mt-[2px] w-[288px] h-[7px] bg-black"><div className="ml-[164px] w-[124px] h-[3px] bg-[#7ba84a]" /></div>
          </div>
          <div className="h-[18px] shrink-0 w-[1276px] border-t-2 border-[#e4e4e6] bg-[#f5f6f7]" />
          <div className="flex-1 min-h-0 w-[1276px] bg-white pt-[191px] text-[29.3px] leading-[38.4px] text-black">
            <div className="-ml-[10px] text-[#666] text-[32px] leading-[44px] mb-[12px] whitespace-nowrap">Configuraciones adicionales</div>
            <div className="-ml-[10px] whitespace-nowrap">El tercer parámetro se <b>define()</b>, al que llamamos config permite pasar configuraciones</div>
            <div className="-ml-[10px] whitespace-nowrap">adicionales de un objeto literal.</div>
            <div className="-ml-[10px] whitespace-nowrap">Algunos ejemplos:</div>
            <div className="flex items-center"><i className="ml-[40px] w-[12px] h-[12px] rounded-full bg-black shrink-0" /><span className="ml-[34px]">Si el nombre de la tabla no cumple con el standard plural en inglés</span></div>
            <div className="flex items-center"><i className="ml-[40px] w-[12px] h-[12px] rounded-full bg-black shrink-0" /><span className="ml-[34px]">Si la tabla no tiene los campos de <b>timestamp</b></span></div>
            <div className="flex items-center"><i className="ml-[40px] w-[12px] h-[12px] rounded-full bg-black shrink-0" /><span className="ml-[34px]">Si los <b>campos</b> de la tabla tienen <b>nombres</b> con <b>guiones bajos</b> en lugar de</span></div>
            <div className="ml-[86px]">camelCase</div>
          </div>
          <div className="h-[24px] shrink-0 bg-white"><div className="w-[1110px] h-[15px] bg-[#c9cacc]" /></div>

          {/* floating toolbar */}
          <div className="absolute left-[369px] top-0 w-[905px] h-[76px] bg-white rounded-br-[10px] shadow-[0_3px_8px_rgba(0,0,0,0.25)] flex items-center">
            <svg width="30" height="30" viewBox="0 0 30 30" fill="none" stroke="#c4c6c9" strokeWidth="2.500" className="ml-[12px] shrink-0"><path d="M2 2h26v20H9l-7 6z" /><path d="M15 7v10M10 12h10" /></svg>
            <svg width="30" height="32" viewBox="0 0 30 32" fill="none" stroke="#5f6368" strokeWidth="3" className="ml-[25px] shrink-0"><rect x="2" y="2" width="26" height="28" rx="2" /><path d="M8 24l6-9 3 5 2-2 4 6z" fill="#5f6368" stroke="none" /></svg>
            <div className="ml-[6px]"><Caret s={8} /></div>
            <Sep ml="ml-[22px]" />
            <div className="ml-[12px] w-[52px] h-[52px] rounded-[6px] bg-[#e8f0fe] flex items-center justify-center shrink-0"><Al w={[29, 19, 29, 19]} a="items-start" c="#2c6ce4" /></div>
            <div className="ml-[15px]"><Al w={[29, 19, 29, 19]} a="items-center" /></div>
            <div className="ml-[27px]"><Al w={[29, 19, 29, 19]} a="items-end" /></div>
            <div className="ml-[27px]"><Al w={[29, 29, 29, 29]} a="items-start" /></div>
            <Sep ml="ml-[21px]" />
            <svg width="36" height="32" viewBox="0 0 36 32" fill="#5f6368" className="ml-[22px] shrink-0"><path d="M6 0l6 7H8v18h4l-6 7-6-7h4V7H0z" /><rect x="16" y="2" width="20" height="4" /><rect x="16" y="14" width="20" height="4" /><rect x="16" y="26" width="20" height="4" /></svg>
            <Sep ml="ml-[20px]" />
            <svg width="34" height="30" viewBox="0 0 34 30" fill="none" stroke="#5f6368" strokeWidth="2.600" className="ml-[20px] shrink-0"><path d="M1 7l4 4 8-9M1 22l4 4 8-9" /><path d="M18 7h14M18 22h14" strokeWidth="3.500" /></svg>
            <svg width="32" height="30" viewBox="0 0 32 30" fill="#5f6368" className="ml-[23px] shrink-0"><circle cx="4" cy="4" r="3.500" /><circle cx="4" cy="15" r="3.500" /><circle cx="4" cy="26" r="3.500" /><rect x="12" y="2" width="20" height="4" /><rect x="12" y="13" width="20" height="4" /><rect x="12" y="24" width="20" height="4" /></svg>
            <div className="ml-[18px]"><Caret s={8} /></div>
            <svg width="32" height="30" viewBox="0 0 32 30" fill="#5f6368" className="ml-[23px] shrink-0"><text x="0" y="9" fontSize="10" fontFamily="Roboto">1</text><text x="0" y="20" fontSize="10" fontFamily="Roboto">2</text><text x="0" y="30" fontSize="10" fontFamily="Roboto">3</text><rect x="12" y="2" width="20" height="4" /><rect x="12" y="13" width="20" height="4" /><rect x="12" y="24" width="20" height="4" /></svg>
            <div className="ml-[21px]"><Caret s={8} /></div>
            <svg width="30" height="30" viewBox="0 0 30 30" fill="#5f6368" className="ml-[24px] shrink-0"><rect width="30" height="4" /><rect y="26" width="30" height="4" /><rect x="14" y="9" width="16" height="4" /><rect x="14" y="17" width="16" height="4" /><path d="M10 8v14l-8-7z" /></svg>
            <svg width="30" height="30" viewBox="0 0 30 30" fill="#5f6368" className="ml-[25px] shrink-0"><rect width="30" height="4" /><rect y="26" width="30" height="4" /><rect x="14" y="9" width="16" height="4" /><rect x="14" y="17" width="16" height="4" /><path d="M0 8v14l8-7z" /></svg>
            <Sep ml="ml-[18px]" />
            <svg width="30" height="32" viewBox="0 0 30 32" fill="none" stroke="#5f6368" strokeWidth="3.500" className="ml-[23px] shrink-0"><path d="M4 3h23M7 3l18 27M23 3L8 30" /></svg>
          </div>
          <div className="absolute left-[1552px] top-[20px] w-0 h-0 border-x-[9px] border-x-transparent border-t-[14px] border-t-[#3b73e0]" />

          {/* floating buttons */}
          <div className="absolute left-[1477px] bottom-[16px] w-[72px] h-[73px] rounded-[4px] bg-[#f7f7f7] border border-[#dadce0] shadow-[0_1px_3px_rgba(0,0,0,0.2)] flex items-center justify-center">
            <svg width="30" height="40" viewBox="0 0 30 40"><path d="M2 0h26a2 2 0 012 2v28a2 2 0 01-2 2H21l-6 8-6-8H2a2 2 0 01-2-2V2a2 2 0 012-2z" fill="#6f7072" /><path d="M15 5c1 7 3 10 10 11-7 1-9 4-10 11-1-7-3-10-10-11 7-1 9-4 10-11z" fill="#fff" /></svg>
          </div>
          <div className="absolute right-0 bottom-[16px] w-[48px] h-[80px] rounded-l-full bg-white shadow-[-1px_0_4px_rgba(0,0,0,0.2)] flex items-center justify-center">
            <ChevronLeft size={32} strokeWidth={2.4} className="text-[#5f6368]" />
          </div>
        </div>
      </div>

      {/* left window */}
      <div className="absolute left-0 top-[80px] w-[1530px] h-[1652px] flex flex-col rounded-tr-[14px] overflow-hidden border-r-2 border-black shadow-[24px_0_60px_rgba(0,0,0,0.4)] bg-white">
        <div className="h-[2px] bg-[#626266] shrink-0" />
        <div className="h-[74px] bg-[#0b0c14] shrink-0" />
        <div className="h-[72px] bg-[#323540] flex items-center shrink-0">
          <div className="w-[1087px] h-[60px] bg-[#1b1c21] rounded-r-[8px] border-y-[4px] border-r-[4px] border-[#7a3d35] flex items-center text-[27.7px] shrink-0">
            <span className="text-[#f2f2f2]">com</span>
            <span className="text-[#9a9ca3] whitespace-nowrap">/course/91c34f35-cc9e-46ed-a04d-555907f539d7/unit/5...</span>
            <Key size={30} strokeWidth={2.6} fill="#d4d4d4" className="text-[#d4d4d4] ml-[41px] shrink-0 rotate-45" />
            <div className="w-[2px] h-[34px] bg-[#8a8c92] ml-[24px] shrink-0" />
            <div className="ml-[22px]"><Brave n="4" /></div>
            <div className="ml-[33px]"><BAT /></div>
          </div>
          <div className="ml-[190px]"><Fox /></div>
          <div className="ml-[33px]"><PI /></div>
          <div className="ml-[32px]"><PuzzleI /></div>
          <div className="ml-[38px]"><Ham c="bg-[#f1f1f1]" /></div>
        </div>
        <div className="h-[66px] pb-[10px] bg-[#323540] flex items-center shrink-0">
          <span className={bmL}>cs</span>
          <Bm icon={<YT />} t="YouTube" cls={bmL} gap="gap-[17px]" ml="ml-[24px]" />
          <Bm icon={<Binance />} t="Binance" cls={bmL} gap="gap-[17px]" ml="ml-[33px]" />
          <Bm icon={<Flow />} t="Flow" cls={bmL} gap="gap-[17px]" ml="ml-[33px]" />
          <Bm icon={<Gecko />} t="Coingecko" cls={bmL} gap="gap-[17px]" ml="ml-[33px]" />
          <Bm icon={<Pancake />} t="Pancake Swap" cls={bmL} gap="gap-[17px]" ml="ml-[33px]" />
          <Bm icon={<TV />} t="Trading view" cls={bmL} gap="gap-[17px]" ml="ml-[33px]" />
          <Bm icon={<CMC />} t="CoinMarketCap" cls={bmL} gap="gap-[17px]" ml="ml-[33px]" />
          <span className="ml-[61px] text-[26px] text-[#f1f1f1]">»</span>
        </div>
        <div className="h-[100px] bg-white shrink-0 z-10 relative shadow-[0_2px_8px_rgba(0,0,0,0.08)] flex items-center text-[26.3px] text-[#555] font-['Open_Sans',sans-serif]">
          <span className="whitespace-nowrap -ml-[10px]">Zoom y Grabaciones</span>
          <span className="ml-[99px] whitespace-nowrap">Info general</span>
        </div>
        <div className="relative flex flex-1 min-h-0 bg-[#f5f5f5]">
          {/* sidebar */}
          <div className="relative w-[195px] h-[1244px] mt-[19px] shrink-0 bg-white rounded-tr-[12px] rounded-br-[6px] border-r-2 border-b-2 border-[#dfdfdf] font-['Open_Sans',sans-serif] text-[#333] text-[25px] flex flex-col">
            <div className="h-[76px] pt-[6px] shrink-0 border-b-2 border-[#dfdfdf] flex items-center font-semibold text-[#3a3a3a]">
              <span className="ml-[20px] text-[27px]">Ocultar</span>
              <ChevronsLeft size={36} strokeWidth={2.2} className="ml-[17px]" />
            </div>
            <div className="h-[210px] shrink-0 border-b-2 border-[#dfdfdf]" />
            <div className="h-[219px] shrink-0 w-[178px] border-b-2 border-[#dfdfdf] pt-[128px] overflow-hidden whitespace-nowrap leading-[32px] tracking-[0.3px]">kbench</div>
            <div className="h-[263px] shrink-0 w-[178px] border-b-2 border-[#dfdfdf] pt-[76px] flex">
              <ChevronDown size={34} strokeWidth={2.4} className="ml-[81px] text-[#444]" />
            </div>
            <div className="flex-1 w-[178px] pt-[98px] flex flex-col font-bold">
              <ChevronUp size={34} strokeWidth={2.4} className="ml-[81px] text-[#444]" />
              <span className="mt-[21px] leading-[32px] text-[27px]">elos.</span>
              <span className="mt-[132px] leading-[32px] text-[24.5px] whitespace-nowrap">y modelos</span>
            </div>
            <div className="absolute right-0 top-[531px] bottom-0 w-[17px] rounded-t-[8px] rounded-b-[8px] bg-[#e4e4e4]" />
          </div>
          {/* main */}
          <div className="ml-[22px] w-[1058px] shrink-0 flex flex-col gap-[22px]">
            <div className="h-[1193px] shrink-0 bg-white border-x-2 border-b-2 border-[#dcdcdc] rounded-b-[12px] pl-[39px] pt-[56px]">
              <div className="w-[976px]">
                <div className="h-[229px] bg-black" />
                <div className="relative h-[548px] bg-white overflow-hidden border-x-2 border-[#222] font-['Open_Sans',sans-serif] text-[#666]">
                  <svg width="976" height="548" viewBox="0 0 976 548" className="absolute inset-0">
                    <path d="M729 0L876 548H976V0z" fill="#8ab355" />
                    <path d="M753 0L897 548H976V0z" fill="#9cc25f" />
                  </svg>
                  <div className="relative pl-[95px] pt-[36px]">
                    <div className="text-[34px] leading-[40px] font-bold text-[#9cc45f] font-['Noto_Sans',sans-serif] tracking-[0.8px]">MODELOS</div>
                    <div className="text-[34.8px] leading-[38px] font-bold text-[#5f5f5f] font-['Noto_Sans',sans-serif] tracking-[-0.3px] whitespace-nowrap">Configuraciones adicionales</div>
                    <div className="text-[20.9px] leading-[26px] whitespace-nowrap">
                      <div>El tercer parámetro de <b>define(),</b> al que llamamos <b><i>config</i></b> permite</div>
                      <div>pasar configuraciones adicionales dentro de un objeto literal.</div>
                      <div>Algunos ejemplos:</div>
                    </div>
                    <div className="text-[21px] leading-[26px] mt-[11px] whitespace-nowrap">
                      {[
                        <>Si el <b>nombre</b> de la tabla no cumple con el standard plural en</>,
                        <span>inglés.</span>,
                        <>Si la <b>tabla no tiene</b> los campos de <b>timestamp.</b></>,
                        <>Si los <b>campos</b> de la tabla tienen <b>nombres</b> con <b>guiones bajos</b></>,
                        <span>en lugar de camelCase.</span>,
                      ].map((c, i) => (
                        <div key={i} className="flex items-center pl-[17px]">
                          <div className={"w-0 h-0 border-y-[5px] border-y-transparent border-l-[7px] shrink-0 " + (i === 1 || i === 4 ? "border-l-transparent" : "border-l-[#444]")} />
                          <span className="ml-[24px]">{c}</span>
                        </div>
                      ))}
                    </div>
                  </div>
                  <div className="absolute left-0 top-[351px] w-[951px] h-[169px] flex bg-[#eeeeee]">
                    <div className="w-[67px] bg-[#bcd7a9] flex items-center justify-center text-white text-[17px] font-['DejaVu_Sans_Mono',monospace]">js</div>
                    <div className="pl-[10px] pt-[20px] text-[17.25px] leading-[22.3px] font-['DejaVu_Sans_Mono',monospace] text-[#222] whitespace-nowrap">
                      <div>let config = &#123;</div>
                      <div className="pl-[48px]">tableName: 'movies', <span className="text-[#a4a4a4]">//Si el nombre de la tabla no coincide con el del modelo</span></div>
                      <div className="text-[#a4a4a4]">en plural.</div>
                      <div className="pl-[48px]">timestamps: false, <span className="text-[#a4a4a4]">//Desabilita las columnas para timestamps en este modelo.</span></div>
                      <div className="pl-[48px]">underscored: true, <span className="text-[#a4a4a4]">//Si los campos tiene guiones bajos.</span></div>
                      <div className="pl-[48px]">&#125;</div>
                    </div>
                  </div>
                  <div className="absolute left-[942px] top-[513px] text-[15px] text-white">12</div>
                </div>
                <div className="h-[227px] bg-black" />
                <div className="h-[72px] bg-[#e3e5e5] flex items-center text-[#3c4043]">
                  <ChevronLeft size={36} strokeWidth={2.4} className="ml-[29px]" />
                  <div className="ml-[22px] w-[89px] h-[56px] rounded-full bg-white flex items-center justify-center text-[33px] font-['Roboto',sans-serif] font-medium">12</div>
                  <ChevronRight size={36} strokeWidth={2.4} className="ml-[23px]" />
                  <div className="ml-[42px] flex flex-col gap-[6px]"><i className="w-[7px] h-[7px] rounded-full bg-[#3c4043]" /><i className="w-[7px] h-[7px] rounded-full bg-[#3c4043]" /><i className="w-[7px] h-[7px] rounded-full bg-[#3c4043]" /></div>
                  <svg width="36" height="36" viewBox="0 0 36 36" className="ml-[440px]"><rect width="36" height="36" rx="3" fill="#3c4043" /><rect x="3" y="9" width="30" height="17" fill="#fff" /></svg>
                  <span className="ml-[16px] text-[29px] font-['Roboto',sans-serif] tracking-[-0.3px] whitespace-nowrap">Google Slides</span>
                </div>
              </div>
            </div>
            <div className="relative flex-1 bg-white border-x-2 border-t-2 border-[#dcdcdc] rounded-t-[12px] flex justify-end pr-[51px] pt-[43px]">
              <div className="flex flex-col gap-[7px]"><i className="w-[7px] h-[7px] rounded-full bg-[#5f6368]" /><i className="w-[7px] h-[7px] rounded-full bg-[#5f6368]" /><i className="w-[7px] h-[7px] rounded-full bg-[#5f6368]" /></div>
            </div>
          </div>
          {/* page scrollbar */}
          <div className="absolute right-0 top-0 bottom-0 w-[21px] bg-[#f8f8f8]"><div className="mt-[653px] h-[321px] rounded-full bg-[#d6d6d6]" /></div>
          <div className="absolute inset-x-0 bottom-0 h-[100px] bg-[linear-gradient(180deg,rgba(0,0,0,0)_0%,rgba(0,0,0,0.12)_100%)]" />
        </div>
      </div>

      {/* dock */}
      <div className="absolute left-[46px] top-[1707px] w-[2785px] h-[82px] rounded-[22px] border-2 border-[#6f5a5e] bg-[linear-gradient(90deg,#5a4347_0%,#5a4347_46%,#4a1a24_62%,#4a1822_100%)] flex pl-[4px] pt-[13px] shadow-[0_0_0_1px_rgba(0,0,0,0.25)]">
        {dock.map((it) => <DockSlot key={it.k} it={it} />)}
      </div>
    </div>
  );
}
